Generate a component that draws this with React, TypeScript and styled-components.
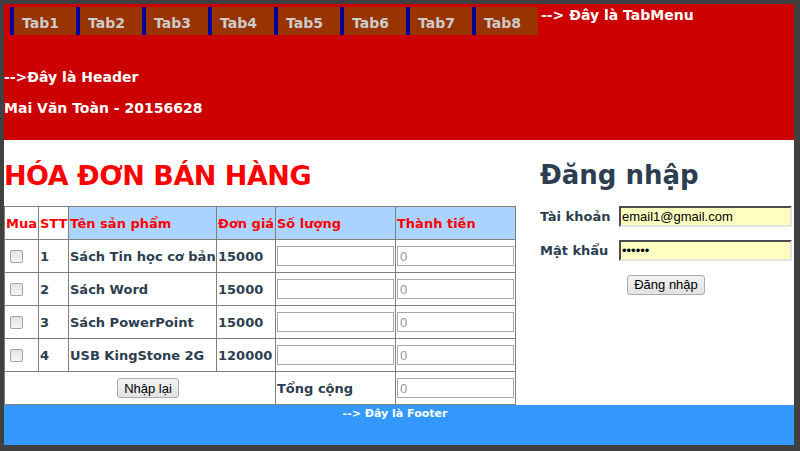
import React from 'react';
import styled, { createGlobalStyle } from 'styled-components';

const GlobalStyle = createGlobalStyle`
	html, body {
		margin: 0;
		padding: 0;
		background: #404040;
	}
	body {
		font-family: "DejaVu Sans", Verdana, sans-serif;
	}
`;

const Page = styled.div`
	box-sizing: border-box;
	width: 800px;
	height: 451px;
	padding: 4px 6px 6px 4px;
	display: flex;
	flex-direction: column;
`;

const Header = styled.header`
	flex-shrink: 0;
	height: 136px;
	background: #cc0000;
	color: #fff;
`;

const TabBar = styled.div`
	display: flex;
	align-items: flex-start;
	margin: 3px 0 0 6px;
`;

const TabList = styled.ul`
	display: flex;
	margin: 0;
	padding: 0;
	list-style: none;
`;

const Tab = styled.li`
	box-sizing: border-box;
	width: 66px;
	height: 28px;
	padding: 5px 0 0 8px;
	border-left: 4px solid #000099;
	background: #993300;
	color: #cccccc;
	font-size: 14px;
	font-weight: bold;
	line-height: 23px;
`;

const Note = styled.span`
	margin-left: 3px;
	font-size: 14px;
	font-weight: bold;
	line-height: 16px;
`;

const HeaderLine = styled.div<{ $top: number }>`
	margin-top: ${({ $top }) => $top}px;
	font-size: 14px;
	font-weight: bold;
	line-height: 16px;
`;

const Main = styled.main`
	flex: 1;
	min-height: 0;
	display: flex;
	gap: 24px;
	background: #fff;
`;

const Invoice = styled.section`
	width: 512px;
	flex-shrink: 0;
`;

const Title = styled.h1`
	margin: 21px 0 15px;
	color: #ff0000;
	font-size: 27px;
	letter-spacing: -0.5px;
	line-height: 30px;
`;

const Table = styled.table`
	width: 512px;
	table-layout: fixed;
	border-collapse: collapse;
	font-size: 13px;
	color: #2c3e50;
`;

const Th = styled.th<{ $w: number; $blue?: boolean }>`
	box-sizing: border-box;
	width: ${({ $w }) => $w}px;
	height: 33px;
	padding: 1px;
	border: 1px solid #808080;
	background: ${({ $blue }) => ($blue ? '#aad4ff' : '#fff')};
	color: #ff0000;
	font-weight: bold;
	text-align: left;
	white-space: nowrap;
	overflow: hidden;
`;

const Td = styled.td<{ $center?: boolean }>`
	box-sizing: border-box;
	height: 33px;
	padding: 1px;
	border: 1px solid #808080;
	font-weight: bold;
	white-space: nowrap;
	overflow: hidden;
	text-align: ${({ $center }) => ($center ? 'center' : 'left')};
`;

const Check = styled.input`
	appearance: none;
	display: block;
	width: 13px;
	height: 13px;
	margin: 3px 3px 3px 4px;
	border: 1px solid #a2a2a2;
	border-radius: 2px;
	background: linear-gradient(#e4e4e4, #f4f4f4);
	box-sizing: border-box;
`;

const CellInput = styled.input`
	display: block;
	box-sizing: border-box;
	width: 117px;
	height: 20px;
	margin: 0;
	padding: 1px 2px;
	border: 1px solid #a9a9a9;
	font-family: "Liberation Sans", Arial, sans-serif;
	font-size: 13px;
	color: #999;
	&::placeholder {
		color: #999;
	}
`;

const Button = styled.button<{ $shift?: number }>`
	height: 20px;
	margin-left: ${({ $shift }) => $shift ?? 0}px;
	padding: 0 6px;
	border: 1px solid #acacac;
	border-radius: 3px;
	background: linear-gradient(#f2f2f2, #e2e2e2);
	font-family: "Liberation Sans", Arial, sans-serif;
	font-size: 13px;
	color: #000;
`;

const Login = styled.section`
	width: 252px;
	color: #2c3e50;
`;

const LoginTitle = styled.h2`
	margin: 20px 0 16px;
	font-size: 26px;
	line-height: 30px;
`;

const LoginForm = styled.form`
	display: grid;
	grid-template-columns: 79px 1fr;
	row-gap: 13px;
	align-items: center;
`;

const Label = styled.label`
	font-size: 13px;
	font-weight: bold;
`;

const Field = styled.input`
	box-sizing: border-box;
	width: 173px;
	height: 21px;
	margin: 0;
	padding: 0 1px;
	border: 2px inset #a0a0a0;
	border-right-color: #e4e4e4;
	border-bottom-color: #e4e4e4;
	background: #ffffc0;
	font-family: "Liberation Sans", Arial, sans-serif;
	font-size: 13px;
	color: #000;
`;

const ButtonRow = styled.div`
	grid-column: 1 / span 2;
	text-align: center;
`;

const Footer = styled.footer`
	flex-shrink: 0;
	height: 40px;
	padding: 2px 8px 0 0;
	box-sizing: border-box;
	background: #3399ff;
	color: #fff;
	font-size: 11px;
	font-weight: bold;
	line-height: 13px;
	text-align: center;
`;

const tabs = ['Tab1', 'Tab2', 'Tab3', 'Tab4', 'Tab5', 'Tab6', 'Tab7', 'Tab8'];

const products = [
	{ id: 1, name: 'Sách Tin học cơ bản', price: 15000 },
	{ id: 2, name: 'Sách Word', price: 15000 },
	{ id: 3, name: 'Sách PowerPoint', price: 15000 },
	{ id: 4, name: 'USB KingStone 2G', price: 120000 },
];

export default function App() {
	return (
		<>
			<GlobalStyle />
			<Page>
				<Header>
					<TabBar>
						<TabList>
							{tabs.map(t => (
								<Tab key={t}>{t}</Tab>
							))}
						</TabList>
						<Note>--&gt; Đây là TabMenu</Note>
					</TabBar>
					<HeaderLine $top={34}>--&gt;Đây là Header</HeaderLine>
					<HeaderLine $top={15}>Mai Văn Toàn - 20156628</HeaderLine>
				</Header>
				<Main>
					<Invoice>
						<Title>HÓA ĐƠN BÁN HÀNG</Title>
						<Table>
							<thead>
								<tr>
									<Th $w={34}>Mua</Th>
									<Th $w={30}>STT</Th>
									<Th $w={148} $blue>Tên sản phẩm</Th>
									<Th $w={59} $blue>Đơn giá</Th>
									<Th $w={120} $blue>Số lượng</Th>
									<Th $w={120} $blue>Thành tiền</Th>
								</tr>
							</thead>
							<tbody>
								{products.map(p => (
									<tr key={p.id}>
										<Td><Check type="checkbox" /></Td>
										<Td>{p.id}</Td>
										<Td>{p.name}</Td>
										<Td>{p.price}</Td>
										<Td><CellInput type="text" /></Td>
										<Td><CellInput type="text" placeholder="0" /></Td>
									</tr>
								))}
								<tr>
									<Td colSpan={4} $center>
										<Button type="button" $shift={16}>Nhập lại</Button>
									</Td>
									<Td>Tổng cộng</Td>
									<Td><CellInput type="text" placeholder="0" /></Td>
								</tr>
							</tbody>
						</Table>
					</Invoice>
					<Login>
						<LoginTitle>Đăng nhập</LoginTitle>
						<LoginForm>
							<Label htmlFor="user">Tài khoản</Label>
							<Field id="user" type="text" defaultValue="email1@gmail.com" />
							<Label htmlFor="pass">Mật khẩu</Label>
							<Field id="pass" type="password" defaultValue="123456" />
							<ButtonRow>
								<Button type="button">Đăng nhập</Button>
							</ButtonRow>
						</LoginForm>
					</Login>
				</Main>
				<Footer>--&gt; Đây là Footer</Footer>
			</Page>
		</>
	);
}
